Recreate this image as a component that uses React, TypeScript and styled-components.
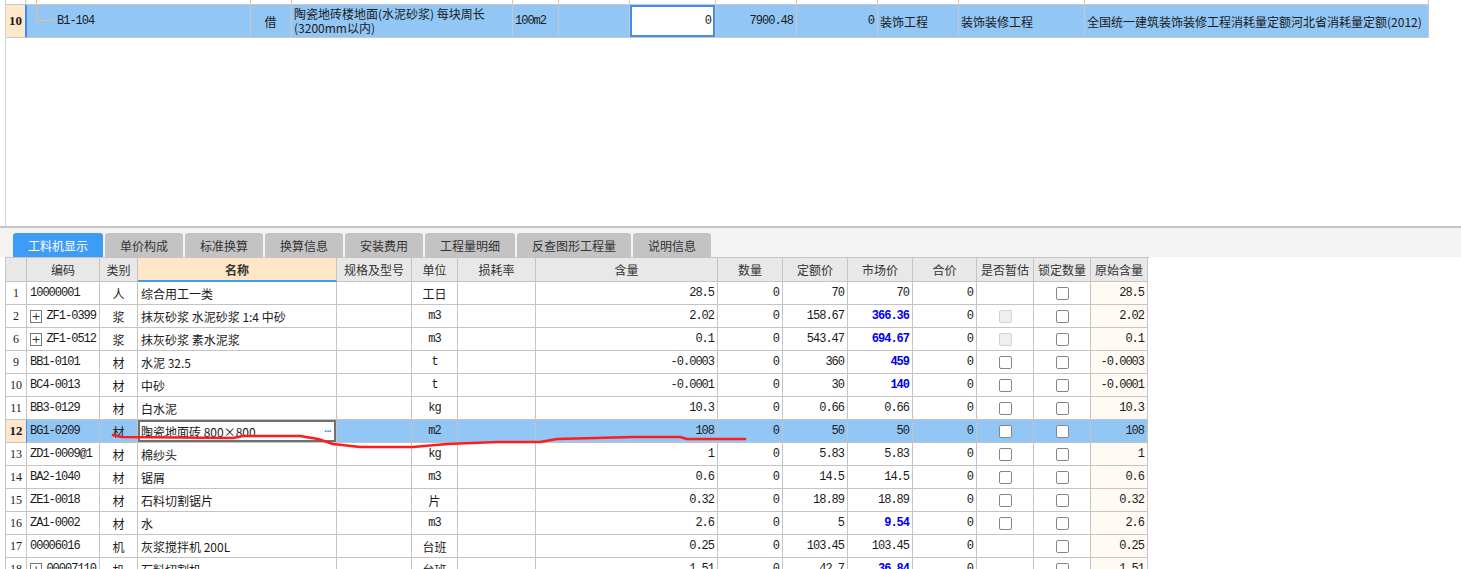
import React from "react";
import styled, { createGlobalStyle } from "styled-components";

const CJK = `"Noto Sans CJK SC", "Noto Sans", sans-serif`;
const MONO = `"Liberation Mono", "Noto Sans CJK SC", monospace`;

const GlobalStyle = createGlobalStyle`
  html, body {
    margin: 0;
    padding: 0;
    background: #fff;
  }
  body {
    font-family: ${CJK};
    font-size: 12px;
    color: #1a1a1a;
  }
`;

const Page = styled.div`
  position: relative;
  width: 1461px;
  height: 569px;
  overflow: hidden;
  background: #fff;
`;

/* ---------- upper grid (quota rows) ---------- */

const TopPane = styled.div`
  height: 226px;
  margin-left: 5px;
  border-left: 1px solid #d2d2d2;
  box-sizing: border-box;
`;

const TopGrid = styled.div`
  display: grid;
  grid-template-columns: 20px 225px 41px 221px 46px 71px 86px 81px 81px 81px 126px 344px;
  grid-template-rows: 5px 33px;
  width: 1423px;
`;

type Align = "left" | "center" | "right";

const justify = (a?: Align) =>
  a === "right" ? "flex-end" : a === "center" ? "center" : "flex-start";

const TopCell = styled.div<{ $align?: Align; $bg?: string; $mono?: boolean }>`
  position: relative;
  display: flex;
  align-items: center;
  justify-content: ${(p) => justify(p.$align)};
  box-sizing: border-box;
  padding: 0 3px 0 2px;
  border-right: 1px solid #c8c8c8;
  border-bottom: 1px solid #c8c8c8;
  background: ${(p) => p.$bg || "#fff"};
  font-family: ${(p) => (p.$mono ? MONO : CJK)};
  font-size: 12px;
  letter-spacing: ${(p) => (p.$mono ? "-1px" : "0")};
  white-space: nowrap;
  overflow: hidden;
`;

const RowNumTop = styled(TopCell)`
  justify-content: center;
  padding: 0;
  background: #ffe7cb;
  border-right: 1px solid #3d8ef0;
  font-family: "Liberation Serif", serif;
  font-weight: bold;
  font-size: 13px;
  letter-spacing: 0;
`;

const TreeCell = styled(TopCell)<{ $end?: boolean }>`
  padding-left: 31px;
  box-shadow: ${(p) => (p.$end ? "inset 1px 0 0 #3d8ef0" : "none")};
  overflow: visible;

  &::before {
    content: "";
    position: absolute;
    left: 10px;
    top: ${(p) => (p.$end ? "-1px" : "0")};
    height: ${(p) => (p.$end ? "16px" : "100%")};
    width: ${(p) => (p.$end ? "16px" : "0")};
    border-left: 1px solid #f3bd78;
    border-bottom: ${(p) => (p.$end ? "1px solid #f3bd78" : "none")};
  }
`;

const TwoLine = styled.div`
  line-height: 14px;
  white-space: normal;
  font-size: 12px;
`;

const InputCell = styled(TopCell)`
  background: #fff;
  box-shadow: inset 0 0 0 2px #3d8ef0;
  padding-right: 4px;
`;

/* ---------- tabs ---------- */

const Splitter = styled.div`
  height: 2px;
  background: #c6c6c6;
`;

const TabBar = styled.div`
  display: flex;
  align-items: flex-end;
  gap: 2px;
  height: 29px;
  padding-left: 13px;
  box-sizing: border-box;
  background: #f3f3f3;
`;

const Tab = styled.div<{ $active?: boolean; $w: number }>`
  display: flex;
  align-items: center;
  justify-content: center;
  width: ${(p) => p.$w}px;
  height: 24px;
  border-radius: 3px 3px 0 0;
  background: ${(p) => (p.$active ? "#3f9cf6" : "#c3c3c3")};
  color: ${(p) => (p.$active ? "#fff" : "#333")};
  font-size: 12px;
`;

/* ---------- lower grid (materials) ---------- */

const LowerPane = styled.div`
  padding-left: 5px;
`;

const Grid = styled.div`
  display: grid;
  grid-template-columns: 21px 73px 38px 199px 75px 46px 78px 182px 65px 65px 65px 64px 57px 57px 57px;
  grid-auto-rows: 23px;
  grid-template-rows: 24px;
  width: 1143px;
  border-left: 1px solid #c4c4c4;
  border-top: 1px solid #c4c4c4;
`;

const HeadCell = styled.div<{ $hot?: boolean }>`
  display: flex;
  align-items: center;
  justify-content: center;
  box-sizing: border-box;
  border-right: 1px solid #c4c4c4;
  border-bottom: ${(p) => (p.$hot ? "2px solid #3d9bf5" : "1px solid #c4c4c4")};
  background: ${(p) => (p.$hot ? "#ffe6c6" : "#e8e8e8")};
  color: #333;
  font-weight: ${(p) => (p.$hot ? "bold" : "normal")};
  font-size: 12px;
  white-space: nowrap;
`;

const Cell = styled.div<{
  $align?: Align;
  $bg?: string;
  $mono?: boolean;
  $blue?: boolean;
}>`
  display: flex;
  align-items: center;
  justify-content: ${(p) => justify(p.$align)};
  gap: 4px;
  box-sizing: border-box;
  padding: 0 3px;
  border-right: 1px solid #c4c4c4;
  border-bottom: 1px solid #c4c4c4;
  background: ${(p) => p.$bg || "#fff"};
  color: ${(p) => (p.$blue ? "#0000f0" : "#1a1a1a")};
  font-weight: ${(p) => (p.$blue ? "bold" : "normal")};
  font-family: ${(p) => (p.$mono ? MONO : CJK)};
  font-size: 12px;
  letter-spacing: ${(p) => (p.$mono ? "-1px" : "0")};
  white-space: nowrap;
  overflow: hidden;
`;

const RowNum = styled(Cell)<{ $sel?: boolean }>`
  justify-content: center;
  padding: 0;
  background: ${(p) => (p.$sel ? "#ffe7cb" : "#fff")};
  border-right: 1px solid ${(p) => (p.$sel ? "#3d8ef0" : "#c4c4c4")};
  box-shadow: ${(p) => (p.$sel ? "1px 0 0 #3d8ef0" : "none")};
  font-family: "Liberation Serif", serif;
  font-weight: ${(p) => (p.$sel ? "bold" : "normal")};
  font-size: ${(p) => (p.$sel ? "13px" : "12px")};
  letter-spacing: 0;
`;

const EditCell = styled(Cell)`
  justify-content: space-between;
  background: #fff;
  box-shadow: inset 0 0 0 2px #707070;
  padding: 0 5px 0 3px;
`;

const Dots = styled.span`
  color: #3d8ef0;
  font-weight: bold;
  font-family: "DejaVu Sans", sans-serif;
  font-size: 9px;
  letter-spacing: -1px;
`;

const PlusBox = styled.span`
  display: inline-flex;
  align-items: center;
  justify-content: center;
  width: 11px;
  height: 11px;
  border: 1px solid #777;
  font-family: "DejaVu Sans", sans-serif;
  font-size: 11px;
  line-height: 1;
  color: #333;
  letter-spacing: 0;
`;

const Check = styled.span<{ $disabled?: boolean }>`
  display: inline-block;
  width: 13px;
  height: 13px;
  box-sizing: border-box;
  border: 1px solid ${(p) => (p.$disabled ? "#d2d2d2" : "#858585")};
  border-radius: 2px;
  background: ${(p) => (p.$disabled ? "#efefef" : "#fff")};
`;

const Annotation = styled.svg`
  position: absolute;
  left: 0;
  top: 0;
  pointer-events: none;
`;

type Est = "none" | "box" | "disabled";

interface Row {
  n: string;
  plus?: boolean;
  code: string;
  type: string;
  name: string;
  unit: string;
  qty: string;
  price: string;
  market: string;
  blue?: boolean;
  est: Est;
  orig: string;
  sel?: boolean;
}

const rows: Row[] = [
  { n: "1", code: "10000001", type: "人", name: "综合用工一类", unit: "工日", qty: "28.5", price: "70", market: "70", est: "none", orig: "28.5" },
  { n: "2", plus: true, code: "ZF1-0399", type: "浆", name: "抹灰砂浆 水泥砂浆 1:4 中砂", unit: "m3", qty: "2.02", price: "158.67", market: "366.36", blue: true, est: "disabled", orig: "2.02" },
  { n: "6", plus: true, code: "ZF1-0512", type: "浆", name: "抹灰砂浆 素水泥浆", unit: "m3", qty: "0.1", price: "543.47", market: "694.67", blue: true, est: "disabled", orig: "0.1" },
  { n: "9", code: "BB1-0101", type: "材", name: "水泥 32.5", unit: "t", qty: "-0.0003", price: "360", market: "459", blue: true, est: "box", orig: "-0.0003" },
  { n: "10", code: "BC4-0013", type: "材", name: "中砂", unit: "t", qty: "-0.0001", price: "30", market: "140", blue: true, est: "box", orig: "-0.0001" },
  { n: "11", code: "BB3-0129", type: "材", name: "白水泥", unit: "kg", qty: "10.3", price: "0.66", market: "0.66", est: "box", orig: "10.3" },
  { n: "12", code: "BG1-0209", type: "材", name: "陶瓷地面砖  800×800", unit: "m2", qty: "108", price: "50", market: "50", est: "box", orig: "108", sel: true },
  { n: "13", code: "ZD1-0009@1", type: "材", name: "棉纱头", unit: "kg", qty: "1", price: "5.83", market: "5.83", est: "box", orig: "1" },
  { n: "14", code: "BA2-1040", type: "材", name: "锯屑", unit: "m3", qty: "0.6", price: "14.5", market: "14.5", est: "box", orig: "0.6" },
  { n: "15", code: "ZE1-0018", type: "材", name: "石料切割锯片", unit: "片", qty: "0.32", price: "18.89", market: "18.89", est: "box", orig: "0.32" },
  { n: "16", code: "ZA1-0002", type: "材", name: "水", unit: "m3", qty: "2.6", price: "5", market: "9.54", blue: true, est: "box", orig: "2.6" },
  { n: "17", code: "00006016", type: "机", name: "灰浆搅拌机 200L", unit: "台班", qty: "0.25", price: "103.45", market: "103.45", est: "none", orig: "0.25" },
  { n: "18", plus: true, code: "00007110", type: "机", name: "石料切割机", unit: "台班", qty: "1.51", price: "42.7", market: "36.84", blue: true, est: "none", orig: "1.51" },
];

const headers = ["", "编码", "类别", "名称", "规格及型号", "单位", "损耗率", "含量", "数量", "定额价", "市场价", "合价", "是否暂估", "锁定数量", "原始含量"];

const tabs: { label: string; w: number }[] = [
  { label: "工料机显示", w: 90 },
  { label: "单价构成", w: 78 },
  { label: "标准换算", w: 78 },
  { label: "换算信息", w: 78 },
  { label: "安装费用", w: 78 },
  { label: "工程量明细", w: 90 },
  { label: "反查图形工程量", w: 114 },
  { label: "说明信息", w: 78 },
];

const SEL = "#92c7f5";
const ORIG = "#fffaf4";

const MaterialRow = ({ r }: { r: Row }) => {
  const bg = r.sel ? SEL : undefined;
  return (
    <>
      <RowNum $sel={r.sel}>{r.n}</RowNum>
      <Cell $mono $bg={bg}>
        {r.plus && <PlusBox>+</PlusBox>}
        {r.code}
      </Cell>
      <Cell $align="center" $bg={bg}>{r.type}</Cell>
      {r.sel ? (
        <EditCell>
          <span>{r.name}</span>
          <Dots>···</Dots>
        </EditCell>
      ) : (
        <Cell $bg={bg}>{r.name}</Cell>
      )}
      <Cell $bg={bg} />
      <Cell $align="center" $bg={bg} $mono={/^[a-z0-9]+$/.test(r.unit)}>{r.unit}</Cell>
      <Cell $bg={bg} />
      <Cell $align="right" $mono $bg={bg}>{r.qty}</Cell>
      <Cell $align="right" $mono $bg={bg}>0</Cell>
      <Cell $align="right" $mono $bg={bg}>{r.price}</Cell>
      <Cell $align="right" $mono $bg={bg} $blue={r.blue}>{r.market}</Cell>
      <Cell $align="right" $mono $bg={bg}>0</Cell>
      <Cell $align="center" $bg={bg}>
        {r.est !== "none" && <Check $disabled={r.est === "disabled"} />}
      </Cell>
      <Cell $align="center" $bg={bg}>
        <Check />
      </Cell>
      <Cell $align="right" $mono $bg={bg || ORIG}>{r.orig}</Cell>
    </>
  );
};

export default function App() {
  return (
    <Page>
      <GlobalStyle />
      <TopPane>
        <TopGrid>
          {/* tail of the row above */}
          <TopCell />
          <TreeCell />
          {Array.from({ length: 10 }).map((_, i) => (
            <TopCell key={i} />
          ))}

          <RowNumTop>10</RowNumTop>
          <TreeCell $end $mono $bg={SEL}>B1-104</TreeCell>
          <TopCell $align="center" $bg={SEL}>借</TopCell>
          <TopCell $bg={SEL}>
            <TwoLine>
              陶瓷地砖楼地面(水泥砂浆) 每块周长
              <br />
              (3200mm以内)
            </TwoLine>
          </TopCell>
          <TopCell $mono $bg={SEL}>100m2</TopCell>
          <TopCell $bg={SEL} />
          <InputCell $align="right" $mono>0</InputCell>
          <TopCell $align="right" $mono $bg={SEL}>7900.48</TopCell>
          <TopCell $align="right" $mono $bg={SEL}>0</TopCell>
          <TopCell $bg={SEL}>装饰工程</TopCell>
          <TopCell $bg={SEL}>装饰装修工程</TopCell>
          <TopCell $bg={SEL}>全国统一建筑装饰装修工程消耗量定额河北省消耗量定额(2012)</TopCell>
        </TopGrid>
      </TopPane>

      <Splitter />
      <TabBar>
        {tabs.map((t, i) => (
          <Tab key={t.label} $w={t.w} $active={i === 0}>
            {t.label}
          </Tab>
        ))}
      </TabBar>

      <LowerPane>
        <Grid>
          {headers.map((h, i) => (
            <HeadCell key={i} $hot={h === "名称"}>
              {h}
            </HeadCell>
          ))}
          {rows.map((r) => (
            <MaterialRow key={r.n} r={r} />
          ))}
        </Grid>
      </LowerPane>

      <Annotation width="1461" height="569" viewBox="0 0 1461 569">
        <polyline
          points="113,435 122,437 233,438 243,436 300,436 318,439 333,444 360,447 413,447 447,444 497,442 540,442 557,439 633,437 680,437 687,439 745,439"
          fill="none"
          stroke="#ff1c1c"
          strokeWidth="2.6"
          strokeLinejoin="round"
          strokeLinecap="round"
        />
      </Annotation>
    </Page>
  );
}
